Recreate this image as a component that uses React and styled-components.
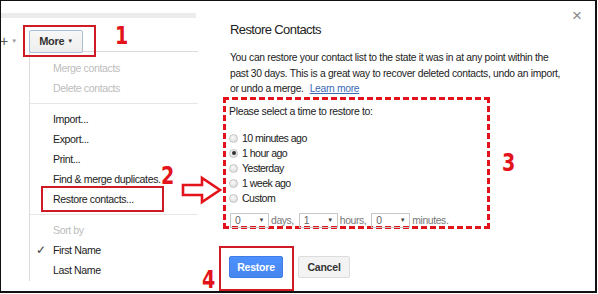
import React from 'react'
import styled, { createGlobalStyle } from 'styled-components'

const GlobalStyle = createGlobalStyle`
  html, body {
    margin: 0;
    padding: 0;
    background: #fff;
  }
  body {
    font-family: "Liberation Sans", Arial, sans-serif;
  }
`

const RED = '#e3131b'

const Frame = styled.div`
  position: relative;
  box-sizing: border-box;
  width: 597px;
  height: 293px;
  border: 1px solid #111;
  border-right-width: 2px;
  border-bottom-width: 2px;
  display: flex;
  overflow: hidden;
  background: #fff;
`

const LeftPanel = styled.div`
  position: relative;
  width: 200px;
  flex: none;
  display: flex;
  flex-direction: column;
`

const TopStrip = styled.div`
  height: 5px;
  margin-top: 12px;
  width: 195px;
  background: #ececec;
`

const Toolbar = styled.div`
  position: relative;
  z-index: 2;
  display: flex;
  align-items: center;
  height: 22px;
  margin-top: 12px;
  margin-left: -1px;
`

const AddBtn = styled.span`
  width: 29px;
  font-size: 14px;
  color: #555;
  display: flex;
  align-items: center;
  gap: 3px;
  small {
    font-size: 6px;
    color: #999;
  }
`

const MoreButton = styled.div`
  position: relative;
  box-sizing: border-box;
  width: 54px;
  height: 23px;
  border: 1px solid #a9bfd6;
  border-radius: 2px;
  background: linear-gradient(#f7f7f7, #eeeeee);
  display: flex;
  align-items: center;
  justify-content: center;
  gap: 3px;
  font-size: 11px;
  font-weight: bold;
  letter-spacing: -0.3px;
  color: #333;
  small {
    font-size: 6px;
  }
`

const Menu = styled.div`
  margin-left: 28px;
  width: 168px;
  margin-top: -1px;
  border-left: 1px solid #dcdcdc;
  border-top: 1px solid #dcdcdc;
  padding: 6px 0 1px;
  font-size: 10.6px;
  letter-spacing: -0.4px;
`

const MenuItem = styled.div`
  position: relative;
  height: 20px;
  line-height: 20px;
  padding-left: 23px;
  color: ${p => (p.$muted ? '#bdbdbd' : '#222')};
`

const Check = styled.span`
  position: absolute;
  left: 6px;
  top: 0;
  color: #444;
  font-size: 12px;
`

const Separator = styled.div`
  height: 1px;
  margin: 5px 0;
  background: #e6e6e6;
`

const Dialog = styled.div`
  position: relative;
  flex: 1;
  padding: 20px 0 0 29px;
  color: #222;
`

const Close = styled.span`
  position: absolute;
  top: 5px;
  right: 13px;
  font-size: 17px;
  color: #8a8a8a;
`

const Title = styled.div`
  font-size: 13px;
  line-height: 18px;
  letter-spacing: -0.6px;
  color: #222;
`

const Intro = styled.p`
  margin: 11px 0 0;
  white-space: nowrap;
  font-size: 10.3px;
  line-height: 15.5px;
  letter-spacing: -0.3px;
  color: #222;
  a {
    margin-left: 6px;
    color: #3a6ab8;
    text-decoration: underline;
  }
`

const TimeBox = styled.div`
  position: relative;
  box-sizing: border-box;
  margin: 0 0 0 -7px;
  width: 267px;
  height: 132px;
  border: 3px dashed ${RED};
  padding: 4px 0 0 3px;
  font-size: 10.5px;
  letter-spacing: -0.35px;
`

const Prompt = styled.div`
  line-height: 15px;
`

const Options = styled.div`
  margin-top: 12px;
  display: flex;
  flex-direction: column;
`

const Option = styled.label`
  display: flex;
  align-items: center;
  gap: 4px;
  height: 15px;
  font-size: 10.6px;
  letter-spacing: -0.55px;
`

const Radio = styled.span`
  box-sizing: border-box;
  width: 9px;
  height: 9px;
  border-radius: 50%;
  border: 1px solid #c4c4c4;
  background: radial-gradient(circle at 40% 35%, #fafafa, #d6d6d6);
  display: flex;
  align-items: center;
  justify-content: center;
  &::after {
    content: '';
    display: ${p => (p.$checked ? 'block' : 'none')};
    width: 4px;
    height: 4px;
    border-radius: 50%;
    background: #333;
  }
`

const SelectRow = styled.div`
  margin-top: 7px;
  margin-left: 1px;
  display: flex;
  align-items: center;
  color: #777;
  font-size: 10.4px;
  letter-spacing: -0.4px;
`

const Select = styled.span`
  box-sizing: border-box;
  width: 39px;
  height: 15px;
  border: 1px solid #c8c8c8;
  display: flex;
  align-items: center;
  justify-content: space-between;
  padding: 0 4px 0 4px;
  margin: 0 2px 0 ${p => p.$gap || 0}px;
  color: #666;
  small {
    font-size: 6px;
    color: #444;
  }
`

const Actions = styled.div`
  display: flex;
  gap: 15px;
  margin-top: 27px;
  margin-left: -1px;
`

const Button = styled.div`
  position: relative;
  box-sizing: border-box;
  width: ${p => p.$w}px;
  height: 22px;
  border-radius: 2px;
  display: flex;
  align-items: center;
  justify-content: center;
  font-size: 10.5px;
  font-weight: bold;
  letter-spacing: -0.2px;
  color: ${p => (p.$primary ? '#fff' : '#333')};
  background: ${p => (p.$primary ? 'linear-gradient(#4d90fe, #4787ed)' : '#f3f3f3')};
  border: 1px solid ${p => (p.$primary ? '#3f7ce8' : '#dcdcdc')};
`

const RedBox = styled.span`
  position: absolute;
  top: ${p => p.$top}px;
  left: ${p => p.$left}px;
  width: ${p => p.$w}px;
  height: ${p => p.$h}px;
  box-sizing: border-box;
  border: 2px solid #cf1b23;
  pointer-events: none;
`

const Step = styled.span`
  position: absolute;
  top: ${p => p.$top}px;
  left: ${p => p.$left}px;
  font-family: "DejaVu Sans Condensed", "Liberation Sans Narrow", sans-serif;
  font-weight: bold;
  font-size: 25px;
  line-height: 22px;
  color: ${RED};
  transform: scaleX(0.85);
  transform-origin: left;
`

const Arrow = () => (
  <svg
    width='44'
    height='30'
    viewBox='0 0 44 30'
    style={{ position: 'absolute', left: 179, top: 174 }}
  >
    <polygon
      points='3,10 22,10 22,3 40,15 22,27 22,20 3,20'
      fill='none'
      stroke={RED}
      strokeWidth='2.6'
    />
  </svg>
)

const menuTop = ['Merge contacts', 'Delete contacts']
const menuMid = ['Import...', 'Export...', 'Print...', 'Find & merge duplicates.', 'Restore contacts...']

const options = ['10 minutes ago', '1 hour ago', 'Yesterday', '1 week ago', 'Custom']

export default function App () {
  return (
    <>
      <GlobalStyle />
      <Frame>
        <LeftPanel>
          <TopStrip />
          <Toolbar>
            <AddBtn>+<small>▼</small></AddBtn>
            <MoreButton>
              More<small>▼</small>
              <RedBox $top={-6} $left={-7} $w={73} $h={32} />
            </MoreButton>
          </Toolbar>
          <Menu>
            {menuTop.map(label => (
              <MenuItem key={label} $muted>{label}</MenuItem>
            ))}
            <Separator />
            {menuMid.map(label => (
              <MenuItem key={label}>
                {label}
                {label.startsWith('Restore') && (
                  <RedBox $top={-3} $left={11} $w={123} $h={26} />
                )}
              </MenuItem>
            ))}
            <Separator />
            <MenuItem $muted>Sort by</MenuItem>
            <MenuItem><Check>✓</Check>First Name</MenuItem>
            <MenuItem>Last Name</MenuItem>
          </Menu>
          <Step $top={164} $left={160}>2</Step>
          <Step $top={24} $left={114}>1</Step>
          <Arrow />
        </LeftPanel>
        <Dialog>
          <Close>×</Close>
          <Title>Restore Contacts</Title>
          <Intro>
            You can restore your contact list to the state it was in at any point within the<br />
            past 30 days. This is a great way to recover deleted contacts, undo an import,<br />
            or undo a merge.<a>Learn more</a>
          </Intro>
          <TimeBox>
            <Prompt>Please select a time to restore to:</Prompt>
            <Options>
              {options.map((o, i) => (
                <Option key={o}>
                  <Radio $checked={i === 1} />
                  {o}
                </Option>
              ))}
            </Options>
            <SelectRow>
              <Select>0<small>▼</small></Select>
              days,
              <Select $gap={5}>1<small>▼</small></Select>
              hours,
              <Select $gap={5}>0<small>▼</small></Select>
              minutes.
            </SelectRow>
          </TimeBox>
          <Step $top={151} $left={301}>3</Step>
          <Actions>
            <Button $primary $w={54}>
              Restore
              <RedBox $top={-11} $left={-11} $w={75} $h={45} />
            </Button>
            <Button $w={52}>Cancel</Button>
          </Actions>
          <Step $top={268} $left={1}>4</Step>
        </Dialog>
      </Frame>
    </>
  )
}
